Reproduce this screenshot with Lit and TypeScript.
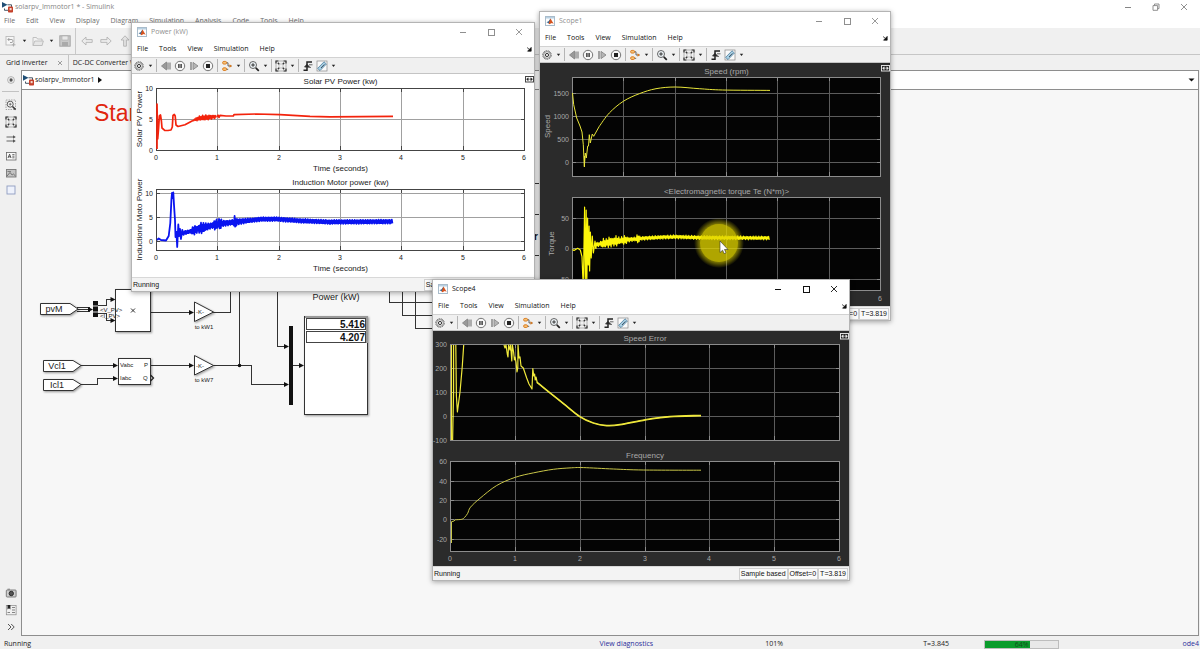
import { LitElement, html, svg, css, nothing } from "lit";
import { customElement, property } from "lit/decorators.js";
import { classMap } from "lit/directives/class-map.js";

type Pt = [number, number];

interface Tick {
  at: number;
  label: string;
}

interface Axes {
  title: string;
  x0: number;
  x1: number;
  y0: number;
  y1: number;
  titleY: number;
  yTicks: Tick[];
  xLabelY?: number;
  xTitleY?: number;
  yTitle?: string;
  yTitleX?: number;
  color: string;
  width: number;
  paths: string[];
}

interface Figure {
  box: string;
  dark: boolean;
  axes: Axes[];
}

const line = (pts: Pt[]): string => "M" + pts.map((p) => p[0] + " " + p[1]).join("L");

const lerp = (pts: Pt[], x: number): number => {
  for (let i = 1; i < pts.length; i++) {
    if (x <= pts[i][0]) {
      const [ax, ay] = pts[i - 1];
      const [bx, by] = pts[i];
      return ay + ((by - ay) * (x - ax)) / (bx - ax);
    }
  }
  return pts[pts.length - 1][1];
};

/* Zigzag about a centre line; the swing is interpolated from the amp points. */
const ripple = (center: Pt[], amp: Pt[], step: number): string => {
  const out: Pt[] = [];
  const end = center[center.length - 1][0];
  let i = 0;
  for (let x = center[0][0]; x <= end; x += step, i++) {
    const wobble = 0.75 + 0.25 * Math.sin(i * 1.7);
    const a = lerp(amp, x) * wobble * (i % 2 ? 1 : -1);
    out.push([+x.toFixed(1), +(lerp(center, x) + a).toFixed(1)]);
  }
  return line(out);
};

/* Smooth curve through the points (Catmull-Rom to Bezier). */
const smooth = (p: Pt[]): string => {
  let d = "M" + p[0].join(" ");
  for (let i = 0; i < p.length - 1; i++) {
    const a = p[Math.max(0, i - 1)];
    const b = p[i];
    const c = p[i + 1];
    const e = p[Math.min(p.length - 1, i + 2)];
    const f = (n: number) => n.toFixed(1);
    d += `C${f(b[0] + (c[0] - a[0]) / 6)} ${f(b[1] + (c[1] - a[1]) / 6)} ${f(c[0] - (e[0] - b[0]) / 6)} ${f(c[1] - (e[1] - b[1]) / 6)} ${c[0]} ${c[1]}`;
  }
  return d;
};

const powerFigure: Figure = {
  box: "132 74 402 203",
  dark: false,
  axes: [
    {
      title: "Solar PV Power (kw)",
      x0: 156, x1: 525, y0: 88, y1: 150, titleY: 84,
      yTicks: [{ at: 88, label: "10" }, { at: 119, label: "5" }, { at: 150, label: "0" }],
      xLabelY: 160, xTitleY: 171,
      yTitle: "Solar PV Power", yTitleX: 142,
      color: "#f3230c", width: 1.7,
      paths: [
        line([[157, 149], [157, 104], [157.7, 139], [158.6, 128], [159.4, 116], [160.5, 115], [161.4, 121], [162, 128], [164.7, 130.3], [168, 130.5], [171, 130], [172.3, 127], [173, 115.5], [174.3, 114.5], [175.2, 116], [176, 125], [178, 126.5], [185, 124.7], [193, 120.5]]),
        ripple([[193, 120.3], [200, 118], [217, 116.6]], [[193, 0.3], [198, 2], [206, 2.6], [217, 1.4]], 0.8),
        line([[217, 116.8], [218, 115.2], [219, 117.4], [220, 115.3], [226, 116], [233.3, 116], [234, 114.6], [256.7, 114], [280, 114.6], [310, 116.4], [330, 116.8], [393, 116.4]]),
      ],
    },
    {
      title: "Induction Motor power (kw)",
      x0: 156, x1: 525, y0: 189, y1: 250, titleY: 185,
      yTicks: [{ at: 193, label: "10" }, { at: 217, label: "5" }, { at: 241, label: "0" }],
      xLabelY: 260, xTitleY: 271,
      yTitle: "Inductionn Moto Power", yTitleX: 142,
      color: "#0a14f0", width: 1.8,
      paths: [
        line([[157, 240], [158.7, 238.5], [161, 240], [166, 240.5], [168.7, 236], [170.3, 223], [171.4, 200], [172, 193], [172.6, 198], [173.3, 192.5], [174, 205], [175, 220], [175.5, 237], [176.4, 232], [177.2, 247], [178.3, 224.5], [179.2, 236], [180, 229], [180.9, 239], [182.3, 230], [183.4, 235]]),
        ripple(
          [[183, 233], [190, 231.5], [200, 228.5], [218, 224], [240, 221.5], [260, 219.3], [275, 219], [300, 220.8], [330, 222], [393, 221.6]],
          [[183, 2], [190, 1.5], [194, 5], [198, 3], [201, 6], [205, 4], [212, 2.5], [216, 6], [218, 3], [220, 7], [222, 3], [233, 2.4], [235, 7], [237, 3], [250, 2], [393, 2]],
          0.6,
        ),
      ],
    },
  ],
};

const scope1Figure: Figure = {
  box: "540 63 350 243",
  dark: true,
  axes: [
    {
      title: "Speed (rpm)",
      x0: 572, x1: 881, y0: 77, y1: 176, titleY: 74,
      yTicks: [{ at: 93, label: "1500" }, { at: 116, label: "1000" }, { at: 139, label: "500" }, { at: 162, label: "0" }],
      yTitle: "Speed", yTitleX: 550,
      color: "#e8e53a", width: 1,
      paths: [
        line([[572.5, 93], [573.7, 104.7], [576.7, 118], [580, 126], [582, 132], [583.3, 144.7], [584.3, 166.7], [585.3, 153], [586.3, 158], [587.7, 146], [588.5, 146], [589.3, 134.7], [590.3, 143], [592.3, 134], [593.7, 136.3], [599.3, 126.3]]),
        line([[584.5, 167], [584.5, 156]]),
        smooth([[599.3, 126.3], [609.3, 113], [623.3, 101.3], [639.3, 93.7], [656, 88.7], [675.3, 87], [699.3, 88.7], [722.7, 90], [770, 90.4]]),
      ],
    },
    {
      title: "<Electromagnetic torque Te (N*m)>",
      x0: 572, x1: 881, y0: 197, y1: 290, titleY: 194,
      yTicks: [{ at: 218, label: "50" }, { at: 248, label: "0" }, { at: 279, label: "-50" }],
      xLabelY: 301,
      yTitle: "Torque", yTitleX: 554,
      color: "#fcf50a", width: 1.2,
      paths: [
        line([[572.5, 249.5], [574, 250.5], [577.7, 248.3], [580.3, 250], [582, 256.7], [583.3, 290], [584.6, 207], [585.4, 290], [586.2, 210], [586.8, 285], [587.6, 218], [588.3, 265], [589.1, 226], [589.6, 271], [590.4, 232], [591.2, 258], [592.3, 236], [593.4, 253], [595, 241], [596, 249]]),
        ripple(
          [[595, 245], [605, 243], [620, 240.5], [640, 238.5], [660, 237.3], [675, 236.8], [700, 237.6], [770, 238]],
          [[595, 3], [600, 2], [603, 5], [607, 4], [609, 6], [613, 4], [616, 6], [620, 3], [625, 5], [628, 2.4], [636, 2], [638, 6], [640, 2], [770, 1.9]],
          0.7,
        ),
      ],
    },
  ],
};

const scope4Figure: Figure = {
  box: "433 331 416 235",
  dark: true,
  axes: [
    {
      title: "Speed Error",
      x0: 450, x1: 840, y0: 344, y1: 440, titleY: 341,
      yTicks: [{ at: 344, label: "300" }, { at: 368, label: "200" }, { at: 392, label: "100" }, { at: 416, label: "0" }, { at: 440, label: "-100" }],
      color: "#f0e93c", width: 1.2,
      paths: [
        line([[451.5, 345], [451.5, 440]]),
        line([[452.6, 440], [453.6, 392], [453.6, 345]]),
        line([[455.8, 345], [456.4, 396], [457.4, 412], [460, 392], [462.3, 366], [463.7, 345]]),
        line([[504, 345], [505, 348], [506, 345], [507.3, 354], [508, 357], [508.6, 345], [510, 350], [510.6, 345], [511.8, 361], [512.4, 345], [513.6, 352], [514.4, 360], [515, 357], [516, 362], [517, 372], [517.8, 368], [518, 345], [519, 358], [520, 357], [521, 366], [523.3, 368], [526.7, 378], [529, 384], [532, 389], [532.8, 368.7], [533.8, 376], [534.6, 374], [535.2, 380], [536, 377], [537.3, 383]]),
        smooth([[537, 382], [546.7, 390], [563.3, 403.2], [580, 416.5], [593.3, 422.7], [606.7, 425.3], [620, 424.4], [645.3, 419.5], [670, 416.3], [701, 415.3]]),
        smooth([[537, 382.6], [546.7, 390.6], [563.3, 403.8], [580, 417.1], [593.3, 423.3], [606.7, 425.9], [620, 425], [645.3, 420.1], [670, 416.9], [701, 415.9]]),
      ],
    },
    {
      title: "Frequency",
      x0: 450, x1: 840, y0: 461, y1: 551, titleY: 458,
      yTicks: [{ at: 461, label: "60" }, { at: 481, label: "40" }, { at: 500, label: "20" }, { at: 519, label: "0" }, { at: 539, label: "-20" }],
      xLabelY: 561,
      color: "#c9c648", width: 1,
      paths: [
        line([[451.5, 543], [451.5, 521.7], [454, 521], [455.3, 519.8]]),
        smooth([[455.3, 519.8], [461.7, 519.3], [464.7, 517.3], [467.7, 513.3], [470.5, 507.2], [480, 498.3], [496.7, 485.5], [515.3, 477.3], [533.3, 472.9], [553.3, 469.3], [570, 467.9], [583.3, 467.6], [613.3, 469], [643.3, 470], [701, 470.2]]),
      ],
    },
  ],
};

const matlabIcon = svg`<svg width="10" height="10" viewBox="0 0 10 10">
  <rect x=".5" y=".5" width="9" height="9" fill="#fdfdfd" stroke="#a9bccb"/>
  <rect x="1" y="1" width="8" height="1.5" fill="#b8d0e2"/>
  <path d="M1.5 6.2 3.6 5.2 5.4 2.6 6 5 4.4 8 3.2 7z" fill="#34658f"/>
  <path d="M5.5 2.6C6.6 4 7.4 6 8.6 7.8L6.8 6.9 4.4 8.2 3.6 7.4z" fill="#d5521e"/></svg>`;

const simulinkIcon = svg`<svg width="12" height="12" viewBox="0 0 12 12">
  <path d="M0 1 5.5 3.8 0 6.8z" fill="#1f4e75"/>
  <path d="M5.5 3.8H9.5V6" fill="none" stroke="#345" stroke-width=".9"/>
  <path d="M2.5 7.5V9.3H6" fill="none" stroke="#345" stroke-width=".9"/>
  <rect x="6" y="5.5" width="5" height="6" rx=".8" fill="#c4402a"/>
  <rect x="7.6" y="7" width="2" height="2.2" fill="#f3d7cd"/></svg>`;

const caretIcon = svg`<svg width="5" height="4" viewBox="0 0 5 4"><path d="M.8.8H4.2L2.5 3z" fill="#222"/></svg>`;

const ic = (body: unknown) => svg`<svg width="12" height="12" viewBox="0 0 12 12" fill="none" stroke="#333" stroke-width=".9">${body}</svg>`;

const toolIcons: Record<string, unknown> = {
  gear: ic(svg`<circle cx="6" cy="6" r="4.3" stroke-width="1" stroke="#777" stroke-dasharray="1.9 .7"/><circle cx="6" cy="6" r="3.4" stroke="#666" stroke-width=".7"/><circle cx="6" cy="6" r="1.6" stroke="#222"/>`),
  back: ic(svg`<path d="M1.5 6 6.5 2V10z" fill="#999" stroke="#888"/><path d="M8 2.5V9.5M10 2.5V9.5" stroke="#888" stroke-width="1.3"/>`),
  pause: ic(svg`<circle cx="6" cy="6" r="4.7" stroke="#666" fill="#f8f8f8"/><path d="M4.9 4V8M7.1 4V8" stroke="#222" stroke-width="1.3"/>`),
  step: ic(svg`<path d="M3 2V10" stroke="#777" stroke-width="1.3"/><path d="M5 2.4 10 6 5 9.6z" fill="#b5b5b5" stroke="#888"/>`),
  stop: ic(svg`<circle cx="6" cy="6" r="4.7" stroke="#666" fill="#f8f8f8"/><rect x="4" y="4" width="4" height="4" fill="#222" stroke="none"/>`),
  signal: ic(svg`<path d="M4.5 2.8H7V6H10.5M4.5 9.3H7.2" stroke="#555"/><rect x="1.6" y="1.4" width="4" height="2.7" rx="1.3" fill="#f6c277" stroke="#d9781a"/><rect x="1.6" y="7.8" width="4" height="2.7" rx="1.3" fill="#f6c277" stroke="#d9781a"/><path d="M8.5 4.3 11 6 8.5 7.8z" fill="#d9781a" stroke="none"/>`),
  zoom: ic(svg`<circle cx="5" cy="5" r="3.5" stroke="#555" fill="#eef4f8"/><path d="M3.2 5H6.8M5 3.2V6.8" stroke="#222"/><path d="M7.8 7.8 10.8 10.8" stroke="#222" stroke-width="1.7"/>`),
  fit: ic(svg`<rect x="1" y="1" width="10" height="10" stroke="#999" stroke-width=".7"/><path d="M1 3.4V1H3.4M8.6 1H11V3.4M11 8.6V11H8.6M3.4 11H1V8.6" stroke="#333" stroke-width="1.2"/><rect x="4" y="4" width="4" height="4" stroke="#aaa" stroke-width=".6"/><path d="M2.8 2.8 4.2 4.2M9.2 2.8 7.8 4.2M2.8 9.2 4.2 7.8M9.2 9.2 7.8 7.8" stroke="#333" stroke-width="1.3"/>`),
  trigger: ic(svg`<path d="M1.5 10.3H5V2H10" stroke="#222" stroke-width="1.5"/><path d="M2.6 7 5 4.2 7.4 7z" fill="#222"/><path d="M7 4.8H10.5M6.5 7.4H9" stroke="#555"/>`),
  measure: ic(svg`<rect x="1" y="1" width="10" height="10" fill="#fafafa" stroke="#888" stroke-width=".7"/><path d="M1.6 8.4 8 1.8 10.4 4 4 10.6z" fill="#a9d0e4" stroke="#3a6f90" stroke-width=".7"/><path d="M5 8 8.4 4.4" stroke="#345"/>`),
  undo: ic(svg`<rect x="1" y="1.5" width="8" height="8.5" stroke="#bbb" fill="#f6f6f6"/><path d="M3 4.5H7A1.6 1.6 0 0 1 7 7.5H5M4.3 3 2.8 4.5 4.3 6" stroke="#999"/><path d="M8.5 8V11.5M6.8 9.8H10.5" stroke="#aaa"/>`),
  folder: ic(svg`<path d="M1 10.5V2.5H4.5L5.5 4H10V10.5z" fill="#f2f2f2" stroke="#bbb"/><path d="M1 10.5 2.8 6H11.4L10 10.5z" fill="#e6e6e6" stroke="#bbb"/>`),
  save: ic(svg`<rect x=".8" y=".8" width="10.4" height="10.4" fill="#c9c9c9" stroke="#a2a2a2"/><rect x="3" y="1" width="6" height="4" fill="#e8e8e8" stroke="#aaa" stroke-width=".6"/><rect x="3" y="7" width="6" height="4" fill="#aaa" stroke="none"/>`),
  left: ic(svg`<path d="M.8 6 5 2V4.6H11.2V7.4H5V10z" fill="#ececec" stroke="#b3b3b3"/>`),
  right: ic(svg`<path d="M11.2 6 7 2V4.6H.8V7.4H7V10z" fill="#ececec" stroke="#b3b3b3"/>`),
  up: ic(svg`<path d="M6 .8 10 5H7.4V11.2H4.6V5H2z" fill="#e2e2e2" stroke="#b3b3b3"/>`),
  hide: ic(svg`<circle cx="6" cy="6" r="3.4" stroke="#999" stroke-width=".7"/><circle cx="6" cy="6" r="1.7" fill="#555" stroke="none"/><path d="M5 6H3.8" stroke="#eee" stroke-width=".7"/>`),
  zoomArea: ic(svg`<rect x="1" y="1" width="9.5" height="9.5" stroke="#888" stroke-width=".7" stroke-dasharray="1.5 1"/><circle cx="5.2" cy="5.2" r="3" stroke="#444" fill="#fff"/><path d="M3.7 5.2H6.7M5.2 3.7V6.7" stroke="#444" stroke-width=".7"/><path d="M7.5 7.5 10.6 10.6" stroke="#333" stroke-width="1.5"/>`),
  arrows: ic(svg`<path d="M1.5 4H9M1.5 8H9" stroke="#555"/><path d="M8 2.3 10.8 4 8 5.7zM8 6.3 10.8 8 8 9.7z" fill="#555" stroke="none"/>`),
  note: ic(svg`<rect x="1.5" y="2.5" width="9.5" height="7.5" stroke="#666" stroke-width=".8" fill="#fafafa"/><path d="M3 8 4.6 4.2 6 8M3.5 6.8H5.6" stroke="#333" stroke-width=".8"/><path d="M7.3 4.6H9.5M7.3 6.2H9.5M7.3 7.8H9.5" stroke="#333" stroke-width=".7"/>`),
  image: ic(svg`<rect x="1.5" y="2.5" width="9.5" height="7.5" stroke="#777" fill="#c3c3c3"/><path d="M2 9 5 5.5 7.2 8 8.4 7 10.5 9" stroke="#666"/><path d="M2.5 4.5H6" stroke="#777"/>`),
  area: ic(svg`<rect x="2" y="2" width="8" height="8" stroke="#8f9cc0" fill="#eef2fc"/>`),
  camera: ic(svg`<rect x="1.3" y="3" width="9.8" height="7" rx=".8" fill="#cfcfcf" stroke="#666" stroke-width=".8"/><circle cx="6.3" cy="6.5" r="2.2" fill="#555" stroke="#222"/><path d="M2.5 2.2H5" stroke="#777"/>`),
  blocks: ic(svg`<rect x="1.3" y="1.5" width="9.8" height="9.3" stroke="#888" stroke-width=".7"/><path d="M2.5 1V5.5L4 4.2 5.4 5.5V1z" fill="#222" stroke="none"/><path d="M7 3.5H10M7 6H10M2.5 8.5H5M7 8.5H10" stroke="#777"/>`),
  more: ic(svg`<path d="M3 3 6 6 3 9M6.2 3 9.2 6 6.2 9" stroke="#444"/>`),
};

const sharedStyles = css`
  * { box-sizing: border-box; }
  button {
    margin: 0;
    padding: 0;
    border: 0;
    background: none;
    color: inherit;
    font: inherit;
    display: inline-flex;
    align-items: center;
    justify-content: center;
    white-space: nowrap;
  }
  svg { display: block; }
  .caret { width: 8px; }
  .controls { display: flex; margin-left: auto; }
  .controls button { width: 28px; height: 14px; }
`;

const windowControls = (restored: boolean) => html`<div class="controls">
  <button aria-label="Minimize"><svg width="8" height="8" fill="none" stroke="currentColor"><path d="M1 4.5H7"/></svg></button>
  <button aria-label=${restored ? "Restore" : "Maximize"}>
    ${restored
      ? html`<svg width="8" height="8" fill="none" stroke="currentColor" stroke-width=".9"><path d="M1 2.6H5.6V7.3H1zM2.5 2.6V1H7V5.6H5.6"/></svg>`
      : html`<svg width="8" height="8" fill="none" stroke="currentColor"><rect x="1.5" y="1.5" width="6" height="6"/></svg>`}
  </button>
  <button aria-label="Close"><svg width="8" height="8" fill="none" stroke="currentColor" stroke-width=".9"><path d="M1 1 7 7M7 1 1 7"/></svg></button>
</div>`;

@customElement("scope-figure")
export class ScopeFigure extends LitElement {
  @property({ attribute: false }) figure!: Figure;

  static styles = css`
    :host { display: block; background: #fff; }
    :host([dark]) { background: #2b2b2b; }
    svg { display: block; width: 100%; height: 100%; }
    text { font-family: "Liberation Sans", Arial, sans-serif; }
    .label { font-size: 8px; }
    .tick { font-size: 7px; }
    .crisp { shape-rendering: crispEdges; }
  `;

  private axes(a: Axes, dark: boolean) {
    const ink = dark ? "#a9a9a9" : "#222";
    const grid = dark ? "#5c5c5c" : "#a0a0a0";
    const frame = dark ? "#8c8c8c" : "#444";
    const mid = (a.x0 + a.x1) / 2;
    const xs = [0, 1, 2, 3, 4, 5, 6].map((n) => Math.round(a.x0 + ((a.x1 - 1 - a.x0) * n) / 6));
    const yMid = (a.y0 + a.y1) / 2;
    return svg`
      <g class="crisp">
        <rect x=${a.x0} y=${a.y0} width=${a.x1 - a.x0} height=${a.y1 - a.y0} fill=${dark ? "#040404" : "#fff"}/>
        <path fill="none" stroke=${grid} d=${xs.map((x) => `M${x + 0.5} ${a.y0}V${a.y1}`).join("") + a.yTicks.map((t) => `M${a.x0} ${t.at + 0.5}H${a.x1}`).join("")}/>
        <path fill="none" stroke=${frame} d=${xs.map((x) => `M${x + 0.5} ${a.y0}v4M${x + 0.5} ${a.y1}v-4`).join("") + a.yTicks.map((t) => `M${a.x0} ${t.at + 0.5}h4M${a.x1} ${t.at + 0.5}h-4`).join("")}/>
        <rect x=${a.x0 + 0.5} y=${a.y0 + 0.5} width=${a.x1 - a.x0 - 1} height=${a.y1 - a.y0} fill="none" stroke=${frame}/>
      </g>
      ${a.paths.map((d) => svg`<path d=${d} fill="none" stroke=${a.color} stroke-width=${a.width} stroke-linejoin="round"/>`)}
      <g fill=${ink}>
        <text class="label" x=${mid} y=${a.titleY} text-anchor="middle">${a.title}</text>
        ${a.yTicks.map((t) => svg`<text class="tick" x=${a.x0 - 3} y=${t.at + 3} text-anchor="end">${t.label}</text>`)}
        ${a.xLabelY ? xs.map((x, n) => svg`<text class="tick" x=${x} y=${a.xLabelY} text-anchor="middle">${n}</text>`) : nothing}
        ${a.xTitleY ? svg`<text class="label" x=${mid} y=${a.xTitleY} text-anchor="middle">Time (seconds)</text>` : nothing}
        ${a.yTitle ? svg`<text class="label" transform=${`translate(${a.yTitleX} ${yMid}) rotate(-90)`} text-anchor="middle">${a.yTitle}</text>` : nothing}
      </g>`;
  }

  render() {
    const f = this.figure;
    const [x, y, w] = f.box.split(" ").map(Number);
    const right = x + w;
    return html`<svg viewBox=${f.box}>
      ${f.axes.map((a) => this.axes(a, f.dark))}
      <g transform=${`translate(${right - 9} ${y + 2})`}>
        <rect x=".5" y=".5" width="8" height="5.5" fill=${f.dark ? "#222" : "#fff"} stroke=${f.dark ? "#ddd" : "#444"}/>
        <path d="M3.2 1.8 1.5 3.2 3.2 4.7zM5.8 1.8 7.5 3.2 5.8 4.7zM3 3.2H6" fill=${f.dark ? "#eee" : "#222"} stroke=${f.dark ? "#eee" : "#222"} stroke-width=".5"/>
      </g>
    </svg>`;
  }
}

@customElement("scope-window")
export class ScopeWindow extends LitElement {
  @property() name = "";
  @property({ type: Boolean }) active = false;
  @property({ attribute: false }) figure!: Figure;

  static styles = [
    sharedStyles,
    css`
      :host {
        display: flex;
        flex-direction: column;
        background: #fff;
        border: 1px solid #b4b4b4;
        box-shadow: 0 1px 5px rgba(0, 0, 0, 0.35);
        font-family: "Open Sans", "Noto Sans", sans-serif;
        font-size: 7px;
        line-height: 10px;
        color: #111;
      }
      .title { display: flex; align-items: center; height: 17px; padding: 0 1px 0 5px; gap: 4px; color: #8f8f8f; }
      .title.active { color: #111; }
      .menu { display: flex; align-items: center; height: 17px; padding: 0 2px 0 5px; gap: 11px; }
      .dock { margin-left: auto; }
      .tools { display: flex; align-items: center; height: 17px; background: #f0f0f0; border-top: 1px solid #d2d2d2; border-bottom: 1px solid #c4c4c4; }
      .tool { width: 14px; }
      .sep { width: 1px; height: 13px; margin: 0 2px; background: #b5b5b5; }
      .figure { flex: 1; min-height: 0; }
      .status { display: flex; align-items: center; height: 14px; padding: 0 1px; background: #f3f3f3; border-top: 1px solid #d8d8d8; font-family: "Liberation Sans", Arial, sans-serif; }
      .state { margin-right: auto; }
      .cell { padding: 0 1px; background: #fafafa; border: 1px solid #d0d0d0; }
    `,
  ];

  render() {
    const groups = [
      ["gear", "v"],
      ["back", "pause", "step", "stop"],
      ["signal", "v"],
      ["zoom", "v"],
      ["fit", "v"],
      ["trigger", "measure", "v"],
    ];
    return html`
      <div class=${classMap({ title: true, active: this.active })}>${matlabIcon}<span>${this.name}</span>${windowControls(false)}</div>
      <div class="menu">
        ${["File", "Tools", "View", "Simulation", "Help"].map((m) => html`<button>${m}</button>`)}
        <button class="dock" aria-label="Dock"><svg width="6" height="6"><path d="M1 1.5 3.6 3.5M5.2 1.4V5.2H1.6z" fill="#111" stroke="#111" stroke-width=".7"/></svg></button>
      </div>
      <div class="tools">
        ${groups.map(
          (g, i) => html`${i ? html`<span class="sep"></span>` : nothing}${g.map((t) =>
            t === "v"
              ? html`<button class="caret" aria-label="Options">${caretIcon}</button>`
              : html`<button class="tool" aria-label=${t}>${toolIcons[t]}</button>`,
          )}`,
        )}
      </div>
      <scope-figure class="figure" ?dark=${this.figure.dark} .figure=${this.figure}></scope-figure>
      <div class="status">
        <span class="state">Running</span>
        <span class="cell">Sample based</span><span class="cell">Offset=0</span><span class="cell">T=3.819</span>
      </div>`;
  }
}

@customElement("model-diagram")
export class ModelDiagram extends LitElement {
  static styles = css`
    :host { display: block; }
    svg { display: block; width: 100%; height: 100%; }
    text { font-family: "Liberation Sans", Arial, sans-serif; fill: #222; }
    .heading { font-size: 23px; fill: #e0260f; }
    .s9 { font-size: 9px; }
    .s6 { font-size: 6px; }
    .value { font-size: 10px; font-weight: 700; fill: #111; }
    .wire { fill: none; stroke: #333; stroke-width: 1; shape-rendering: crispEdges; }
    .block { fill: #fff; stroke: #333; stroke-width: 1; filter: drop-shadow(1px 1px 1px rgba(0, 0, 0, 0.4)); }
    .head { fill: #111; }
  `;

  private head(x: number, y: number) {
    return svg`<path class="head" d=${`M${x} ${y}l-5 -2.5v5z`}/>`;
  }

  render() {
    return html`<svg>
      <g transform="translate(-22 -90)">
        <text class="heading" x="94" y="121">Start</text>
        <path class="wire" d="M77 307.5H90M77 309.5H90M77 311.5H90M97 305.5H106.500V299.500H112M97 313.500H106.500V320.500H112M151 312.500H190M213 312.500H230.500V280M81 365.500H115M81 384.500H97.500V378.500H115M151 365.500H190M213 365.500H251.500V384.500H286M239.500 365V280M277.500 280V346.500H286M293 365.500H301M389.500 280V302.500H440M402.500 280V315.500H440M415.500 280V328.500H440M530 183.500H545M530 214.500H545M530 255.500H545"/>
        <text class="value" x="534" y="240">r</text>
        <path class="block" d="M40.500 303.500H70L78 309 70 314.500H40.500zM43.500 360.500H73L81 365.500 73 371.500H43.500zM43.500 379.500H73L81 384.500 73 390.500H43.500z"/>
        <text class="s9" x="54" y="312" text-anchor="middle">pvM</text>
        <text class="s9" x="57" y="369" text-anchor="middle">Vcl1</text>
        <text class="s9" x="57" y="388" text-anchor="middle">Icl1</text>
        <rect class="head" x="93" y="301" width="5" height="16"/>
        <path d="M93 306H98M93 312H98" stroke="#ddd"/>
        <rect class="block" x="115.500" y="289.500" width="35" height="42"/>
        <text class="s6" x="100" y="312">&lt;V_PV&gt;</text>
        <text class="s6" x="100" y="318">&lt;I_PV&gt;</text>
        <path d="M131 308.500 135 312.500M135 308.500 131 312.500" stroke="#333"/>
        <rect class="block" x="118.500" y="358.500" width="32" height="26"/>
        <text class="s6" x="120" y="367">Vabc</text>
        <text class="s6" x="120" y="380">Iabc</text>
        <text class="s6" x="144" y="367">P</text>
        <text class="s6" x="143" y="380">Q</text>
        <path d="M150.500 375 153.500 378 150.500 381" fill="none" stroke="#222" stroke-width="1.300"/>
        <path class="block" d="M194.500 302V321.500L213.500 312zM194.500 355.500V375L213.500 365.500z"/>
        <text class="s6" x="196" y="314">-K-</text>
        <text class="s6" x="196" y="368">-K-</text>
        <text class="s6" x="204" y="329" text-anchor="middle">to kW1</text>
        <text class="s6" x="204" y="382" text-anchor="middle">to kW7</text>
        <circle class="head" cx="239.500" cy="365.500" r="1.800"/>
        <rect class="head" x="289" y="326" width="4" height="79"/>
        <text class="s9" x="336" y="300" text-anchor="middle">Power (kW)</text>
        <rect class="block" x="304.500" y="316.500" width="63" height="98"/>
        <path d="M305 317H367V343" fill="none" stroke="#999" stroke-width="2"/>
        <rect x="306.500" y="318.500" width="59" height="11" fill="#fff" stroke="#444"/>
        <rect x="306.500" y="331.500" width="59" height="11" fill="#fff" stroke="#444"/>
        <text class="value" x="365" y="328" text-anchor="end">5.416</text>
        <text class="value" x="365" y="341" text-anchor="end">4.207</text>
        ${this.head(93, 309.5)}${this.head(115.5, 299.5)}${this.head(115.5, 320.5)}
        ${this.head(194, 312.5)}${this.head(118, 365.5)}${this.head(118, 378.5)}
        ${this.head(194, 365.5)}${this.head(289, 346.5)}${this.head(289, 384.5)}${this.head(304, 365.5)}
      </g>
    </svg>`;
  }
}

@customElement("app-root")
export class AppRoot extends LitElement {
  static styles = [
    sharedStyles,
    css`
      :host {
        display: flex;
        flex-direction: column;
        position: relative;
        height: 100vh;
        overflow: hidden;
        background: #f0f0f0;
        font-family: "Open Sans", "Noto Sans", sans-serif;
        font-size: 7px;
        line-height: 10px;
        color: #222;
      }
      .title { display: flex; align-items: center; height: 14px; padding: 0 2px; gap: 1px; background: #fff; color: #858585; }
      .menu { display: flex; align-items: center; height: 14px; padding: 0 4px; gap: 11px; background: #fff; color: #6c6c6c; }
      .tools { display: flex; align-items: center; height: 27px; padding: 0 1px; border-bottom: 1px solid #c6c6c6; }
      .tool { width: 19px; height: 20px; }
      .sep { width: 1px; height: 26px; margin: 0 1px; background: #c9c9c9; }
      .tabs { display: flex; align-items: center; height: 15px; padding: 0 6px; }
      .tab { display: flex; align-items: center; height: 15px; gap: 9px; padding-right: 5px; margin-right: 4px; border-right: 1px solid #c4c4c4; }
      .work { display: flex; flex: 1; min-height: 0; }
      .rail { display: flex; flex-direction: column; align-items: center; width: 21px; padding-top: 4px; gap: 5px; }
      .rail button { width: 14px; height: 12px; }
      .rule { width: 17px; height: 1px; margin: 0 0 2px; background: #c2c2c2; }
      .push { margin-top: auto; }
      .rail .last { margin-bottom: 3px; }
      .editor { display: flex; flex: 1; flex-direction: column; min-width: 0; margin-right: 1px; border: 1px solid #8e8e8e; background: #f7f7f7; }
      .crumb { display: flex; align-items: center; height: 19px; gap: 1px; padding: 0 3px 0 1px; background: #fff; border-bottom: 1px solid #8e8e8e; }
      .drop { margin-left: auto; }
      .canvas { flex: 1; min-height: 0; }
      .status { display: grid; grid-template-columns: 600fr 166fr 158fr 61fr 215fr; align-items: center; height: 13px; padding-right: 1px; padding-top: 3px; }
      .state { padding-left: 4px; }
      .link { color: #2b2f9c; text-decoration: none; }
      .run { display: flex; align-items: center; justify-content: space-between; }
      .meter { position: relative; width: 75px; height: 9px; }
      .meter progress { display: block; width: 100%; height: 100%; appearance: none; border: 1px solid #bdbdbd; background: #e8e8e8; }
      .meter progress::-webkit-progress-bar { background: #e8e8e8; }
      .meter progress::-webkit-progress-value { background: #0a9c2c; }
      .meter span { position: absolute; inset: 0; text-align: center; color: #134d1c; line-height: 9px; }
      .win { position: absolute; }
      .power { left: 131px; top: 22px; width: 404px; height: 270px; }
      .scope1 { left: 539px; top: 11px; width: 352px; height: 310px; }
      .scope4 { left: 432px; top: 279px; width: 418px; height: 302px; }
      .pointer { position: absolute; left: 692px; top: 216px; }
    `,
  ];

  private tool(name: string) {
    return html`<button class="tool" aria-label=${name}>${toolIcons[name]}</button>`;
  }

  render() {
    const menus = ["File", "Edit", "View", "Display", "Diagram", "Simulation", "Analysis", "Code", "Tools", "Help"];
    const rail = ["zoomArea", "fit", "arrows", "note", "image", "area"];
    return html`
      <header class="title">${simulinkIcon}<span>solarpv_Immotor1 * - Simulink</span>${windowControls(true)}</header>
      <nav class="menu">${menus.map((m) => html`<button>${m}</button>`)}</nav>
      <div class="tools">
        ${this.tool("undo")}<button class="caret" aria-label="New options">${caretIcon}</button>
        ${this.tool("folder")}<button class="caret" aria-label="Open options">${caretIcon}</button>
        ${this.tool("save")}<span class="sep"></span>
        ${this.tool("left")}${this.tool("right")}${this.tool("up")}
      </div>
      <div class="tabs">
        <div class="tab"><span>Grid Inverter</span>
          <button aria-label="Close tab"><svg width="6" height="6" stroke="#888" stroke-width=".8"><path d="M1 1 5 5M5 1 1 5"/></svg></button>
        </div>
        <span>DC-DC Converter With MPPT</span>
      </div>
      <div class="work">
        <aside class="rail">
          <button aria-label="Hide">${toolIcons.hide}</button>
          <span class="rule"></span>
          ${rail.map((r) => html`<button aria-label=${r}>${toolIcons[r]}</button>`)}
          <button class="push" aria-label="Screenshot">${toolIcons.camera}</button>
          <button aria-label="Model browser">${toolIcons.blocks}</button>
          <button class="last" aria-label="More">${toolIcons.more}</button>
        </aside>
        <main class="editor">
          <div class="crumb">
            <button class="name">${simulinkIcon}<span>solarpv_Immotor1</span></button>
            <svg width="8" height="8"><path d="M2 1 6 4 2 7z" fill="#111"/></svg>
            <button class="drop" aria-label="History"><svg width="7" height="4"><path d="M.5.5H6.500L3.500 3.500z" fill="#111"/></svg></button>
          </div>
          <model-diagram class="canvas"></model-diagram>
        </main>
      </div>
      <footer class="status">
        <span class="state">Running</span>
        <a class="link" href="#diagnostics">View diagnostics</a>
        <span>101%</span>
        <span>T=3.845</span>
        <div class="run">
          <div class="meter"><progress max="100" value="62" aria-label="Simulation progress"></progress><span>64%</span></div>
          <a class="link" href="#solver">ode4</a>
        </div>
      </footer>
      <scope-window class="win power" name="Power (kW)" .figure=${powerFigure}></scope-window>
      <scope-window class="win scope1" name="Scope1" .figure=${scope1Figure}></scope-window>
      <svg class="pointer" width="54" height="54" viewBox="692 216 54 54">
        <defs>
          <radialGradient id="halo">
            <stop offset="0.760" stop-color="#f5e800" stop-opacity="0.500"/>
            <stop offset="1" stop-color="#f5e800" stop-opacity="0"/>
          </radialGradient>
        </defs>
        <circle cx="719" cy="243" r="25" fill="url(#halo)"/>
        <circle cx="719" cy="243" r="19" fill="#d8cc00" fill-opacity="0.550"/>
        <path d="M720 241V252.500L722.600 250.200 724.200 253.600 726 252.700 724.500 249.500H728z" fill="#fff" stroke="#333" stroke-width=".6"/>
      </svg>
      <scope-window class="win scope4" name="Scope4" active .figure=${scope4Figure}></scope-window>
    `;
  }
}
